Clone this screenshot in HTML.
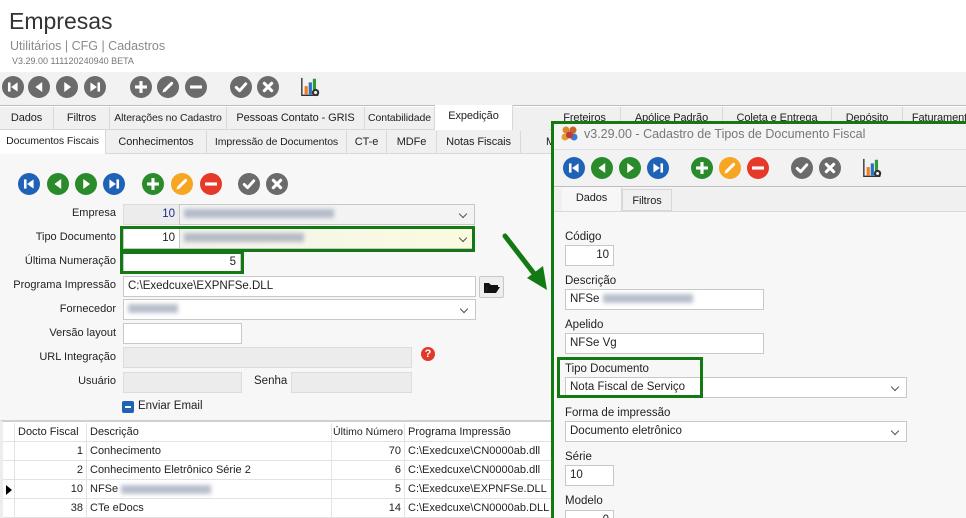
<!DOCTYPE html>
<html><head><meta charset="utf-8">
<style>
*{box-sizing:border-box;margin:0;padding:0}
html,body{width:966px;height:518px;overflow:hidden}
body{position:relative;background:#fff;font-family:"Liberation Sans",sans-serif;font-size:11.5px;color:#222}
.a{position:absolute}
.t{position:absolute;white-space:nowrap}
.ic{position:absolute;width:22px;height:22px}
.tab{position:absolute;height:23px;line-height:22px;text-align:center;border-right:1px solid #d8d8d8;border-bottom:1px solid #d8d8d8;background:#f0f0f0;font-size:11px;white-space:nowrap;overflow:hidden;letter-spacing:-0.1px}
.sel{background:#fff;border-bottom:none}
.in{position:absolute;background:#fff;border:1px solid #c8c8c8;height:21px;line-height:19px;padding:0 4px;font-size:11.5px;white-space:nowrap;overflow:hidden}
.gr{background:#ececec;border-color:#dcdcdc}
.lb{position:absolute;text-align:right;width:116px;left:0px;font-size:11px;white-space:nowrap}
.blur{display:inline-block;height:9px;background:#9aa3b5;filter:blur(2px);vertical-align:middle;opacity:.7}
.dd::after{content:"";position:absolute;right:8px;top:6px;width:5px;height:5px;border-right:1px solid #555;border-bottom:1px solid #555;transform:rotate(45deg)}
.gb{position:absolute;border:3px solid #137a13}
.row{position:absolute;left:3px;width:550px;height:19px;border-bottom:1px solid #e3e3e3;font-size:11px;line-height:18px}
.c{position:absolute;top:0;height:19px;border-left:1px solid #e3e3e3;padding:0 3px;white-space:nowrap;overflow:hidden}
</style></head><body>
<svg width="0" height="0" style="position:absolute">
<defs>
<symbol id="first" viewBox="0 0 24 24"><circle cx="12" cy="12" r="12" fill="currentColor"/><rect x="6.5" y="7" width="2.8" height="10" fill="#fff"/><polygon points="17,7 17,17 10,12" fill="#fff"/></symbol>
<symbol id="prev" viewBox="0 0 24 24"><circle cx="12" cy="12" r="12" fill="currentColor"/><polygon points="15.5,6.5 15.5,17.5 8,12" fill="#fff"/></symbol>
<symbol id="next" viewBox="0 0 24 24"><circle cx="12" cy="12" r="12" fill="currentColor"/><polygon points="9,6.5 9,17.5 16.5,12" fill="#fff"/></symbol>
<symbol id="last" viewBox="0 0 24 24"><circle cx="12" cy="12" r="12" fill="currentColor"/><polygon points="7,7 7,17 14,12" fill="#fff"/><rect x="14.7" y="7" width="2.8" height="10" fill="#fff"/></symbol>
<symbol id="plus" viewBox="0 0 24 24"><circle cx="12" cy="12" r="12" fill="currentColor"/><rect x="10.3" y="5.5" width="3.4" height="13" fill="#fff"/><rect x="5.5" y="10.3" width="13" height="3.4" fill="#fff"/></symbol>
<symbol id="edit" viewBox="0 0 24 24"><circle cx="12" cy="12" r="12" fill="currentColor"/><path d="M8.5 15.5 L16 8" stroke="#fff" stroke-width="3.2" stroke-linecap="round"/><polygon points="6,18 7,14.5 9.5,17" fill="#fff"/></symbol>
<symbol id="minus" viewBox="0 0 24 24"><circle cx="12" cy="12" r="12" fill="currentColor"/><rect x="5.5" y="10.3" width="13" height="3.4" fill="#fff"/></symbol>
<symbol id="ok" viewBox="0 0 24 24"><circle cx="12" cy="12" r="12" fill="currentColor"/><polyline points="6.8,12.5 10.5,16 17.2,8.5" fill="none" stroke="#fff" stroke-width="3.2" stroke-linejoin="round" stroke-linecap="round"/></symbol>
<symbol id="no" viewBox="0 0 24 24"><circle cx="12" cy="12" r="12" fill="currentColor"/><path d="M8 8 L16 16 M16 8 L8 16" stroke="#fff" stroke-width="3.4" stroke-linecap="round"/></symbol>
<symbol id="chart" viewBox="0 0 24 24"><path d="M2 2 V21 H20" stroke="#333" stroke-width="1.5" fill="none"/><rect x="5" y="11" width="3.5" height="9" fill="#ef7d22"/><rect x="9.5" y="7" width="3.5" height="13" fill="#2a6fc4"/><rect x="14" y="3" width="3.5" height="12" fill="#2f9a3a"/><circle cx="17" cy="18" r="4" fill="#333"/><circle cx="17" cy="18" r="1.6" fill="#fff"/></symbol>
</defs></svg>

<div class="t" style="left:9px;top:8px;font-size:23px;color:#333">Empresas</div>
<div class="t" style="left:10px;top:39px;font-size:12.5px;color:#8a8a8a">Utilitários | CFG | Cadastros</div>
<div class="t" style="left:12px;top:56px;font-size:9px;color:#777">V3.29.00 111120240940 BETA</div>

<div class="a" style="left:0;top:72px;width:966px;height:34px;background:#f2f2f2;border-bottom:1px solid #bdbdbd"></div>
<svg class="ic" style="left:2px;top:76px;color:#6b6b6b"><use href="#first"/></svg>
<svg class="ic" style="left:28px;top:76px;color:#6b6b6b"><use href="#prev"/></svg>
<svg class="ic" style="left:56px;top:76px;color:#6b6b6b"><use href="#next"/></svg>
<svg class="ic" style="left:84px;top:76px;color:#6b6b6b"><use href="#last"/></svg>
<svg class="ic" style="left:130px;top:76px;color:#6b6b6b"><use href="#plus"/></svg>
<svg class="ic" style="left:157px;top:76px;color:#6b6b6b"><use href="#edit"/></svg>
<svg class="ic" style="left:185px;top:76px;color:#6b6b6b"><use href="#minus"/></svg>
<svg class="ic" style="left:230px;top:76px;color:#6b6b6b"><use href="#ok"/></svg>
<svg class="ic" style="left:257px;top:76px;color:#6b6b6b"><use href="#no"/></svg>
<svg class="ic" style="left:300px;top:76px"><use href="#chart"/></svg>

<div class="a" style="left:0;top:107px;width:966px;height:23px;background:#f0f0f0"></div>
<div class="tab" style="left:0;top:107px;width:54px">Dados</div>
<div class="tab" style="left:54px;top:107px;width:56px">Filtros</div>
<div class="tab" style="left:110px;top:107px;width:117px;font-size:10.5px">Alterações no Cadastro</div>
<div class="tab" style="left:227px;top:107px;width:138px">Pessoas Contato - GRIS</div>
<div class="tab" style="left:365px;top:107px;width:70px;font-size:10.5px">Contabilidade</div>
<div class="tab sel" style="left:435px;top:105px;width:78px;height:25px">Expedição</div>
<div class="tab" style="left:549px;top:107px;width:72px">Freteiros</div>
<div class="tab" style="left:621px;top:107px;width:102px">Apólice Padrão</div>
<div class="tab" style="left:723px;top:107px;width:109px">Coleta e Entrega</div>
<div class="tab" style="left:832px;top:107px;width:71px">Depósito</div>
<div class="tab" style="left:903px;top:107px;width:80px">Faturamento</div>
<div class="a" style="left:0;top:130px;width:560px;height:23px;background:#f0f0f0"></div>
<div class="tab sel" style="left:0;top:130px;width:106px;height:24px;font-size:10.5px">Documentos Fiscais</div>
<div class="tab" style="left:106px;top:131px;width:101px">Conhecimentos</div>
<div class="tab" style="left:207px;top:131px;width:140px;font-size:10.5px">Impressão de Documentos</div>
<div class="tab" style="left:347px;top:131px;width:40px">CT-e</div>
<div class="tab" style="left:387px;top:131px;width:50px">MDFe</div>
<div class="tab" style="left:437px;top:131px;width:84px">Notas Fiscais</div>
<div class="tab" style="left:521px;top:131px;width:40px;text-align:left;padding-left:25px">M</div>

<div class="a" style="left:0;top:154px;width:555px;height:266px;background:#f7f7f7"></div>
<svg class="ic" style="left:18px;top:173px;color:#1f62b6"><use href="#first"/></svg>
<svg class="ic" style="left:47px;top:173px;color:#2a8b2a"><use href="#prev"/></svg>
<svg class="ic" style="left:75px;top:173px;color:#2a8b2a"><use href="#next"/></svg>
<svg class="ic" style="left:103px;top:173px;color:#1f62b6"><use href="#last"/></svg>
<svg class="ic" style="left:142px;top:173px;color:#2a8b2a"><use href="#plus"/></svg>
<svg class="ic" style="left:171px;top:173px;color:#f6a623"><use href="#edit"/></svg>
<svg class="ic" style="left:200px;top:173px;color:#e5392a"><use href="#minus"/></svg>
<svg class="ic" style="left:238px;top:173px;color:#6b6b6b"><use href="#ok"/></svg>
<svg class="ic" style="left:266px;top:173px;color:#6b6b6b"><use href="#no"/></svg>

<div class="lb" style="top:207px">Empresa</div>
<div class="in gr" style="left:123px;top:204px;width:57px;text-align:right;color:#1a2a8a">10</div>
<div class="in dd" style="left:179px;top:204px;width:296px;background:#f3f3f3"><span class="blur" style="width:150px"></span></div>
<div class="lb" style="top:231px">Tipo Documento</div>
<div class="in" style="left:123px;top:228px;width:57px;text-align:right">10</div>
<div class="in dd" style="left:179px;top:228px;width:296px;background:linear-gradient(90deg,#f3f3ee,#fbfbe0)"><span class="blur" style="width:120px"></span></div>
<div class="gb" style="left:120px;top:226px;width:355px;height:26px"></div>
<div class="lb" style="top:255px">Última Numeração</div>
<div class="in" style="left:123px;top:252px;width:118px;text-align:right">5</div>
<div class="gb" style="left:120px;top:251px;width:124px;height:23px"></div>
<div class="lb" style="top:279px">Programa Impressão</div>
<div class="in" style="left:123px;top:276px;width:353px">C:\Exedcuxe\EXPNFSe.DLL</div>
<div class="a" style="left:479px;top:276px;width:25px;height:22px;background:#eee;border:1px solid #c8c8c8;border-radius:2px"><svg width="25" height="22" style="position:absolute;left:-1px;top:-1px"><path d="M5 7 h5 l2 2 h7 v2 H9 l-3 6 H5z" fill="#111"/><path d="M9 11 h12 l-4 6 H6z" fill="#111"/></svg></div>
<div class="lb" style="top:303px">Fornecedor</div>
<div class="in dd" style="left:123px;top:299px;width:353px"><span class="blur" style="width:50px"></span></div>
<div class="lb" style="top:327px">Versão layout</div>
<div class="in" style="left:123px;top:323px;width:119px"></div>
<div class="lb" style="top:351px">URL Integração</div>
<div class="in gr" style="left:123px;top:347px;width:289px"></div>
<div class="a" style="left:421px;top:347px;width:14px;height:14px;border-radius:50%;background:#e0392b;color:#fff;font-weight:bold;font-size:11px;text-align:center;line-height:14px">?</div>
<div class="lb" style="top:375px">Usuário</div>
<div class="in gr" style="left:123px;top:372px;width:119px"></div>
<div class="t" style="left:254px;top:375px">Senha</div>
<div class="in gr" style="left:291px;top:372px;width:121px"></div>
<div class="a" style="left:122px;top:401px;width:12px;height:12px;background:#1f62b6;border-radius:2px"><div class="a" style="left:3px;top:5px;width:6px;height:2px;background:#fff"></div></div>
<div class="t" style="left:138px;top:400px">Enviar Email</div>

<div class="a" style="left:0;top:420px;width:555px;height:98px;background:#fff;border-top:2px solid #cfcfcf;border-left:3px solid #eee"></div>
<div class="row" style="top:423px"><div class="c" style="left:11px;width:72px">Docto Fiscal</div><div class="c" style="left:83px;width:245px">Descrição</div><div class="c" style="left:328px;width:73px;font-size:10.5px;padding:0 1px">Último Número</div><div class="c" style="left:401px;width:150px">Programa Impressão</div></div>
<div class="row" style="top:442px"><div class="c" style="left:11px;width:72px;text-align:right">1</div><div class="c" style="left:83px;width:245px">Conhecimento</div><div class="c" style="left:328px;width:73px;text-align:right">70</div><div class="c" style="left:401px;width:150px">C:\Exedcuxe\CN0000ab.dll</div></div>
<div class="row" style="top:461px"><div class="c" style="left:11px;width:72px;text-align:right">2</div><div class="c" style="left:83px;width:245px">Conhecimento Eletrônico Série 2</div><div class="c" style="left:328px;width:73px;text-align:right">6</div><div class="c" style="left:401px;width:150px">C:\Exedcuxe\CN0000ab.dll</div></div>
<div class="row" style="top:480px"><div class="a" style="left:3px;top:5px;width:0;height:0;border-top:5px solid transparent;border-bottom:5px solid transparent;border-left:6px solid #000"></div><div class="c" style="left:11px;width:72px;text-align:right">10</div><div class="c" style="left:83px;width:245px">NFSe <span class="blur" style="width:90px"></span></div><div class="c" style="left:328px;width:73px;text-align:right">5</div><div class="c" style="left:401px;width:150px">C:\Exedcuxe\EXPNFSe.DLL</div></div>
<div class="row" style="top:499px"><div class="c" style="left:11px;width:72px;text-align:right">38</div><div class="c" style="left:83px;width:245px">CTe eDocs</div><div class="c" style="left:328px;width:73px;text-align:right">14</div><div class="c" style="left:401px;width:150px">C:\Exedcuxe\CN0000ab.DLL</div></div>

<svg class="a" style="left:495px;top:226px" width="60" height="70"><path d="M10 10 L44 54" stroke="#137a13" stroke-width="5" stroke-linecap="round"/><polygon points="52,64 32,52 48,40" fill="#137a13"/></svg>

<div class="a" style="left:551px;top:121px;width:420px;height:420px;border:3px solid #137a13;background:#f7f7f7">
 <div class="a" style="left:0;top:0;width:420px;height:26px;background:#f4f4f4;border-bottom:1px solid #e0e0e0"></div>
 <div class="a" style="left:0;top:26px;width:420px;height:37px;background:#f2f2f2;border-bottom:1px solid #bdbdbd"></div>
 <div class="a" style="left:0;top:64px;width:420px;height:24px;background:#f0f0f0;border-bottom:1px solid #d8d8d8"></div>
</div>
<svg class="a" style="left:561px;top:126px" width="18" height="16"><circle cx="5" cy="4" r="3.5" fill="#d98a2b"/><circle cx="12" cy="4" r="3.5" fill="#c9652a"/><circle cx="4" cy="11" r="3.5" fill="#e0a030"/><circle cx="13" cy="11" r="3.5" fill="#3b7bd0"/><circle cx="8.5" cy="9" r="3.5" fill="#c43a3a"/></svg>
<div class="t" style="left:584px;top:127px;font-size:12.5px;color:#777">v3.29.00 - Cadastro de Tipos de Documento Fiscal</div>
<svg class="ic" style="left:563px;top:157px;color:#1f62b6"><use href="#first"/></svg>
<svg class="ic" style="left:591px;top:157px;color:#2a8b2a"><use href="#prev"/></svg>
<svg class="ic" style="left:619px;top:157px;color:#2a8b2a"><use href="#next"/></svg>
<svg class="ic" style="left:647px;top:157px;color:#1f62b6"><use href="#last"/></svg>
<svg class="ic" style="left:691px;top:157px;color:#2a8b2a"><use href="#plus"/></svg>
<svg class="ic" style="left:719px;top:157px;color:#f6a623"><use href="#edit"/></svg>
<svg class="ic" style="left:747px;top:157px;color:#e5392a"><use href="#minus"/></svg>
<svg class="ic" style="left:791px;top:157px;color:#6b6b6b"><use href="#ok"/></svg>
<svg class="ic" style="left:819px;top:157px;color:#6b6b6b"><use href="#no"/></svg>
<svg class="ic" style="left:862px;top:157px"><use href="#chart"/></svg>
<div class="tab sel" style="left:562px;top:187px;width:60px;height:24px;background:#f7f7f7">Dados</div>
<div class="tab" style="left:622px;top:189px;width:50px;height:22px;border-left:1px solid #d8d8d8;border-top:1px solid #d8d8d8">Filtros</div>

<div class="t" style="left:565px;top:231px">Código</div>
<div class="in" style="left:565px;top:245px;width:49px;text-align:right">10</div>
<div class="t" style="left:565px;top:275px">Descrição</div>
<div class="in" style="left:565px;top:289px;width:199px">NFSe <span class="blur" style="width:90px"></span></div>
<div class="t" style="left:565px;top:319px">Apelido</div>
<div class="in" style="left:565px;top:333px;width:199px">NFSe Vg</div>
<div class="t" style="left:565px;top:363px">Tipo Documento</div>
<div class="in dd" style="left:565px;top:377px;width:342px">Nota Fiscal de Serviço</div>
<div class="gb" style="left:557px;top:357px;width:146px;height:41px"></div>
<div class="t" style="left:565px;top:407px">Forma de impressão</div>
<div class="in dd" style="left:565px;top:421px;width:342px">Documento eletrônico</div>
<div class="t" style="left:565px;top:451px">Série</div>
<div class="in" style="left:565px;top:465px;width:49px">10</div>
<div class="t" style="left:565px;top:495px">Modelo</div>
<div class="in" style="left:565px;top:510px;width:49px;text-align:right">0</div>
</body></html>
